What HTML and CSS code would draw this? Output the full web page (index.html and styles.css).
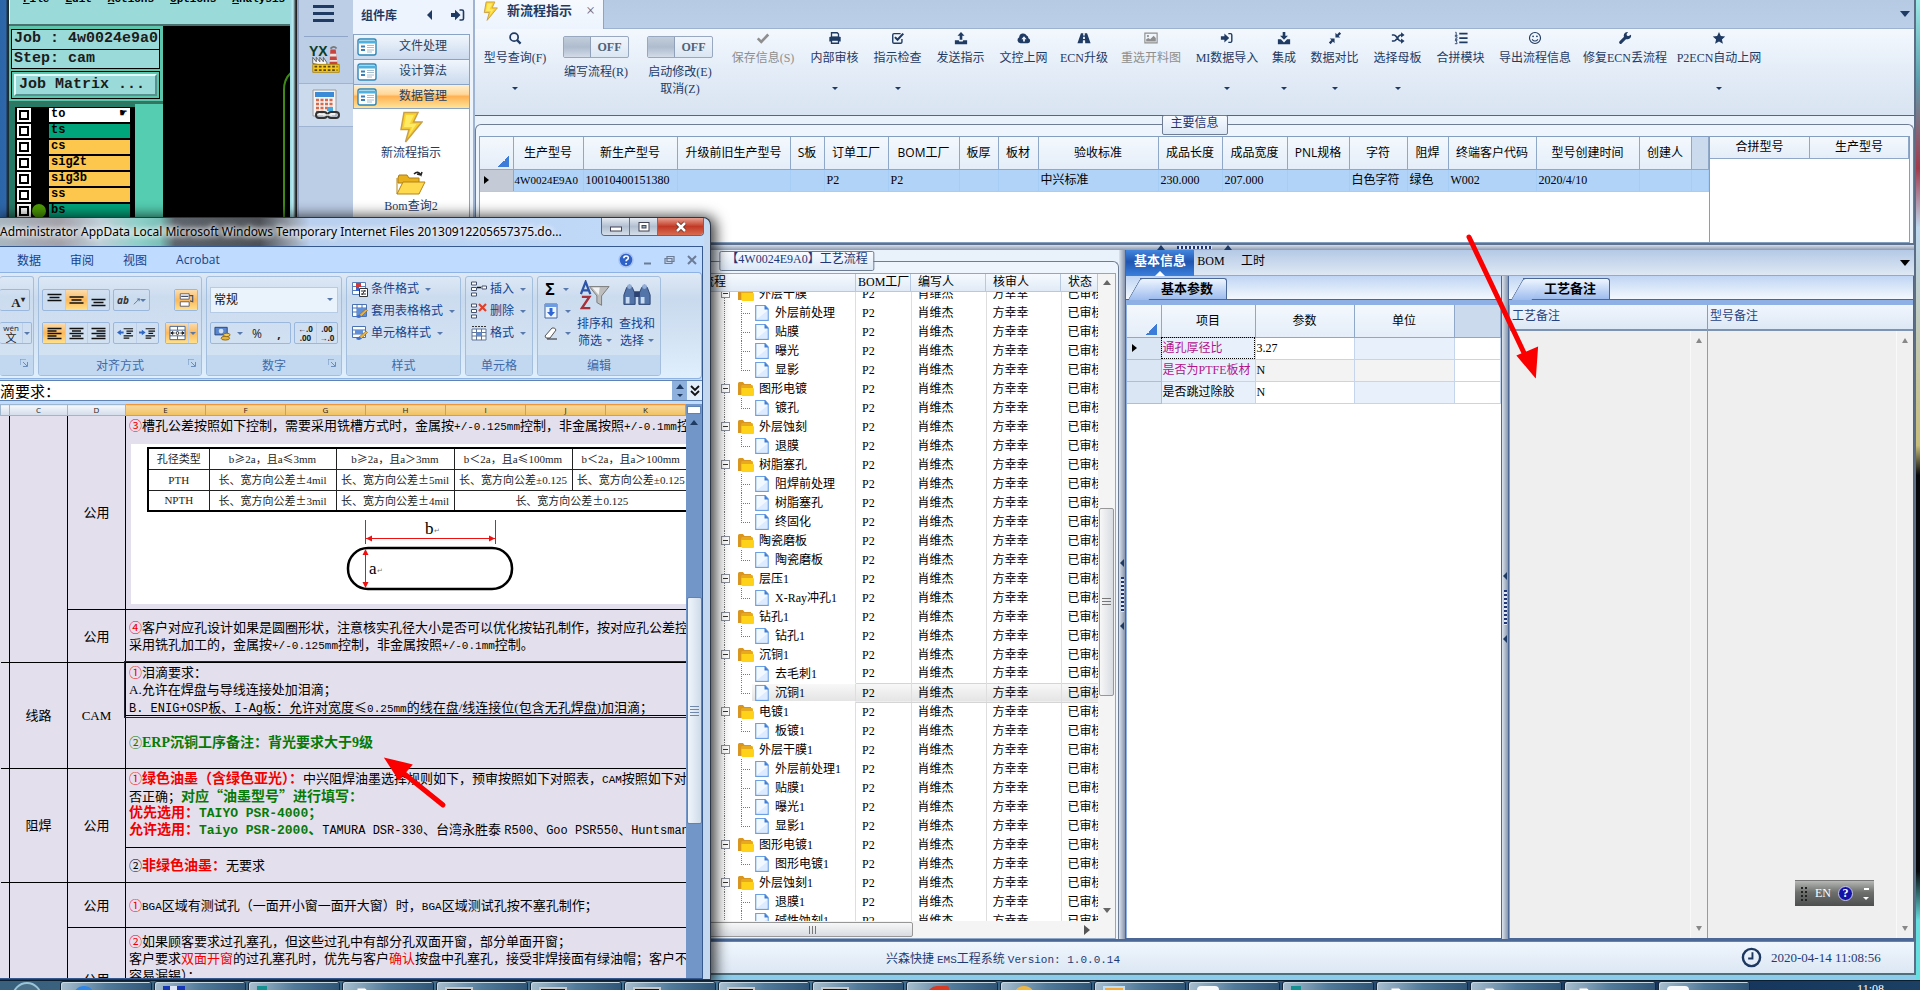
FILE: index.html
```html
<!DOCTYPE html>
<html lang="zh-CN">
<head>
<meta charset="utf-8">
<title>EMS工程系统</title>
<link rel="stylesheet" href="styles.css">
</head>
<body>
<svg class="defs" aria-hidden="true">
  <symbol id="i-search" viewBox="0 0 16 16"><circle cx="7" cy="7" r="4.6" fill="none" stroke="currentColor" stroke-width="2"/><path d="M10.4 10.4l4 4" stroke="currentColor" stroke-width="2.6"/></symbol>
  <symbol id="i-check" viewBox="0 0 16 16"><path d="M2 8.500l4 4 8-8.500" fill="none" stroke="currentColor" stroke-width="3"/></symbol>
  <symbol id="i-print" viewBox="0 0 16 16"><path d="M4 2h6.500L12 3.500V7H4z" fill="none" stroke="currentColor" stroke-width="1.500"/><path d="M1.500 7.500q0-1 1-1h11q1 0 1 1V12H1.500z" fill="currentColor"/><path d="M4 10.500h8V14H4z" fill="#eef3fb" stroke="currentColor" stroke-width="1.500"/></symbol>
  <symbol id="i-checkbox" viewBox="0 0 16 16"><path d="M12.500 9v3.500q0 1.500-1.500 1.500H3.500Q2 14 2 12.500V4.500Q2 3 3.500 3H11" fill="none" stroke="currentColor" stroke-width="1.600"/><path d="M4.500 7l3 3 6.500-7" fill="none" stroke="currentColor" stroke-width="2.400"/></symbol>
  <symbol id="i-upload" viewBox="0 0 16 16"><path d="M8 1l4 4.500H9.500V10h-3V5.500H4z" fill="currentColor"/><path d="M1 10.500h4.500L6 12h4l.5-1.500H15V15H1z" fill="currentColor"/></symbol>
  <symbol id="i-download" viewBox="0 0 16 16"><path d="M8 10L3.500 5.500h3V1h3v4.500h3z" fill="currentColor"/><path d="M1 9.500h3.500L8 13l3.500-3.500H15V15H1z" fill="currentColor"/></symbol>
  <symbol id="i-cloud" viewBox="0 0 16 16"><path d="M4 14A3.600 3.600 0 0 1 2.500 7.200 4.500 4.500 0 0 1 11 5.200a3 3 0 0 1 2 3A3 3 0 0 1 12.500 14z" fill="currentColor"/><path d="M8 6l3 3.500H9V12H7V9.500H5z" fill="#eef3fb"/></symbol>
  <symbol id="i-road" viewBox="0 0 16 16"><path d="M4.500 2.500h2.700L7 5h2l-.2-2.500h2.700L15.500 14H9.400L9.200 10.500H6.800L6.600 14H.5zM7 6.500L6.900 9h2.200L9 6.500z" fill="currentColor" fill-rule="evenodd"/></symbol>
  <symbol id="i-image" viewBox="0 0 16 16"><path d="M1 2.500h14v11H1z" fill="none" stroke="currentColor" stroke-width="1.300"/><circle cx="4.500" cy="5.800" r="1.300" fill="currentColor"/><path d="M2.500 12V9.500L5 8l2 1.500L11 5.500 13.500 8v4z" fill="currentColor"/></symbol>
  <symbol id="i-signin" viewBox="0 0 16 16"><path d="M1 6h4V2.800L10.500 8 5 13.200V10H1z" fill="currentColor"/><path d="M9.500 3H12q1.500 0 1.500 1.500v7q0 1.500-1.500 1.500H9.500" fill="none" stroke="currentColor" stroke-width="1.600"/></symbol>
  <symbol id="i-compress" viewBox="0 0 16 16"><path d="M2 8.500h5.500V14l-1.900-1.900L3 15 1 13l2.900-2.600zM14 7.500H8.500V2l1.900 1.900L13 1l2 2-2.900 2.600z" fill="currentColor"/></symbol>
  <symbol id="i-random" viewBox="0 0 16 16"><path d="M1 4.500h2.500c3 0 4.500 7 7.500 7h1.500M1 11.500h2.500c3 0 4.500-7 7.500-7h1.500" fill="none" stroke="currentColor" stroke-width="1.800"/><path d="M11.500 1.500l4 3-4 3zM11.500 8.500l4 3-4 3z" fill="currentColor"/></symbol>
  <symbol id="i-listol" viewBox="0 0 16 16"><path d="M6 3h9.500M6 8h9.500M6 13h9.500" stroke="currentColor" stroke-width="2"/><path d="M1.500 1.500h1V5M1 5h3M1 6.500h2.500v1.300L1.200 9.500H4M1 11h2.500L2.500 12.500 3.500 13.500v1H1" fill="none" stroke="currentColor"/></symbol>
  <symbol id="i-smile" viewBox="0 0 16 16"><circle cx="8" cy="8" r="6.300" fill="none" stroke="currentColor" stroke-width="1.300"/><circle cx="5.800" cy="6" r="1" fill="currentColor"/><circle cx="10.200" cy="6" r="1" fill="currentColor"/><path d="M4.600 9.500q3.400 4 6.800 0" fill="none" stroke="currentColor" stroke-width="1.200"/></symbol>
  <symbol id="i-wrench" viewBox="0 0 16 16"><path d="M9 7L3 13" stroke="currentColor" stroke-width="3.400" stroke-linecap="round"/><path d="M14.800 4.200A4.200 4.200 0 1 1 11.500 1.200L9.800 3.500l.4 2 2 .3z" fill="currentColor"/></symbol>
  <symbol id="i-star" viewBox="0 0 16 16"><path d="M8 1l2.100 4.700 5 .5-3.800 3.400 1.200 5L8 12l-4.500 2.600 1.200-5L.9 6.200l5-.5z" fill="currentColor"/></symbol>
  <symbol id="i-bolt" viewBox="0 0 24 32"><path d="M5 1.500h14L14.500 11H23L6.500 31 10 18.500H2z" fill="#fbd22c" stroke="#c9a04a" stroke-width="1.500"/><path d="M7 4h8l-4.500 9h7L10 24l3-8H5z" fill="#ffea63"/></symbol>
  <symbol id="i-form" viewBox="0 0 20 18"><rect x="1" y="1" width="18" height="16" rx="2" fill="#fff" stroke="#2d86b8" stroke-width="1.400"/><path d="M2 2.500h16v3H2z" fill="#4fb1dd"/><path d="M4 8.500h4M4 12h4" stroke="#3c7fb5" stroke-width="2"/><path d="M10 7.500h7M10 9.500h7M10 12h7M10 14h5" stroke="#a8bfd0"/></symbol>
  <symbol id="i-folder" viewBox="0 0 16 16"><path d="M0 2.500Q0 1 1.500 1H5l1.500 2H13v3H3v8H0z" fill="#d9951d"/><path d="M3 5.500Q3 4 4.500 4H14q1 0 1 1.500V14H3z" fill="#e7a91d"/><path d="M3.500 7H15q1 0 1 1v6q0 1-1 1H4.500q-1 0-1-1z" fill="#ffd21a"/></symbol>
  <symbol id="i-page" viewBox="0 0 14 17"><path d="M.7 1.500h9.500l3 3.500v11.300H.7z" fill="#f2f8ff" stroke="#6ca0e2" stroke-width="1.200"/><path d="M9.500 1l4 4.500h-4z" fill="#3c7ed8"/><path d="M2 15h10V7z" fill="#dcebff"/></symbol>
  <symbol id="i-open" viewBox="0 0 30 26"><path d="M2 8l1-3h8l2 3h10v5H2z" fill="#e8b01c" stroke="#ad7e14"/><path d="M1 24L7 12h22l-6 12z" fill="#ffd94e" stroke="#b58416"/><path d="M1 24V8" stroke="#b58416"/><path d="M18 4q4-4 7 1l1-3m-1 3l-4-1" fill="none" stroke="#222" stroke-width="1.500"/></symbol>
  <symbol id="i-factory" viewBox="0 0 34 32"><path d="M22 4h6l2 17h-9z" fill="#c8433d"/><path d="M21.700 9h7.200v3h-7.500zM21 16h8.700v2h-9z" fill="#e9e1dd"/><path d="M2 20v-7l4 5v-5l4 5v-5l4 5v-5l4 6v4z" fill="#f6f6f6" stroke="#555"/><path d="M2 21h30v9H2z" fill="#f4c81d" stroke="#ab8410"/><path d="M4 23.500h26M4 27.500h26" stroke="#5d470d" stroke-width="2" stroke-dasharray="3 2"/><path d="M22 3q4-4 7 0" fill="none" stroke="#777" stroke-width="2"/></symbol>
  <symbol id="i-calc" viewBox="0 0 30 32"><path d="M2 1h23v26H2z" fill="#f3f3f3" stroke="#9b9b9b"/><path d="M4 3h19v5H4z" fill="#3b8ad8"/><path d="M5 11h17M5 15h17M5 19h17M5 23h8" stroke="#d9694a" stroke-width="2.500" stroke-dasharray="3 1.500"/><path d="M16 18h6v4h-6z" fill="#48a8e0"/><rect x="5" y="23" width="11" height="6" rx="3" fill="none" stroke="#333" stroke-width="2"/><rect x="17" y="23" width="11" height="6" rx="3" fill="none" stroke="#333" stroke-width="2"/><path d="M12 26h9" stroke="#eee" stroke-width="1.500"/></symbol>
  <symbol id="i-launch" viewBox="0 0 8 8"><path d="M0 6V0h6M7.500 3v4.500H3M3 3l4 4" fill="none" stroke="#6c8dbb"/></symbol>
  <symbol id="a-top" viewBox="0 0 16 16"><path d="M1 2.500h14M3 5.500h10M1 8.500h14" stroke="#111" stroke-width="1.400"/></symbol>
  <symbol id="a-mid" viewBox="0 0 16 16"><path d="M1 5h14M3 8h10M1 11h14" stroke="#111" stroke-width="1.400"/></symbol>
  <symbol id="a-bot" viewBox="0 0 16 16"><path d="M1 7.500h14M3 10.500h10M1 13.500h14" stroke="#111" stroke-width="1.400"/></symbol>
  <symbol id="a-left" viewBox="0 0 16 16"><path d="M1 3.500h14M1 6h9M1 8.500h14M1 11h9M1 13.500h14" stroke="#111" stroke-width="1.300"/></symbol>
  <symbol id="a-center" viewBox="0 0 16 16"><path d="M1 3.500h14M3.500 6h9M1 8.500h14M3.500 11h9M1 13.500h14" stroke="#111" stroke-width="1.300"/></symbol>
  <symbol id="a-right" viewBox="0 0 16 16"><path d="M1 3.500h14M6 6h9M1 8.500h14M6 11h9M1 13.500h14" stroke="#111" stroke-width="1.300"/></symbol>
  <symbol id="a-out" viewBox="0 0 18 16"><path d="M7 3.500h10M10 6h7M10 8.500h5M7 11h10M7 13.500h6" stroke="#111" stroke-width="1.300"/><path d="M0 7.500l4-3v2h3v2H4v2z" fill="#2f66c4"/></symbol>
  <symbol id="a-in" viewBox="0 0 18 16"><path d="M7 3.500h10M10 6h7M10 8.500h5M7 11h10M7 13.500h6" stroke="#111" stroke-width="1.300"/><path d="M7 7.500l-4-3v2H0v2h3v2z" fill="#2f66c4"/></symbol>
  <symbol id="a-orient" viewBox="0 0 18 16"><path d="M8 15L17 6M17 6l-4 .5M17 6l-.5 4" fill="none" stroke="#4a648c" stroke-width="1.300"/></symbol>
  <symbol id="a-wrap" viewBox="0 0 18 18"><path d="M2 2h10v6H2zM2 11h10v5H2z" fill="#fff" stroke="#556"/><path d="M3 5h8M12 4h4v7l-3-1" stroke="#44506c" fill="none" stroke-width="1.300"/></symbol>
  <symbol id="a-merge" viewBox="0 0 18 16"><path d="M1 1h16v14H1zM1 5h16M1 11h16M9 1v4M9 11v4" fill="#fff" stroke="#44628e"/><path d="M2 8h4M16 8h-4M2 8l2-1.500v3zM16 8l-2-1.500v3z" stroke="#222" fill="#222"/><circle cx="9" cy="8" r="1.500" fill="none" stroke="#222"/></symbol>
  <symbol id="a-cond" viewBox="0 0 16 16"><path d="M.5 1.500h13v12H.5zM.5 5.500h13M.5 9.500h13" fill="#fff" stroke="#5a7fb8"/><path d="M4 2h5v4H4z" fill="#cc3b3b"/><path d="M4 6h3v4H4z" fill="#3b63cc"/><path d="M7.500 7.500h8v8h-8z" fill="#fff" stroke="#333"/><path d="M9 10h5M9 13h5M13 9l-3 5" stroke="#333"/></symbol>
  <symbol id="a-table" viewBox="0 0 16 16"><path d="M.5 1.500h14v12H.5zM.5 5h14M.5 9h14M5 1.500v12M10 1.500v12" fill="#fff" stroke="#4a72b0"/><path d="M5 5h9v8H5z" fill="#5f8fd8"/><path d="M7 12l7-6 1.500 1.500L9 14z" fill="#e2b14a" stroke="#8a6427" stroke-width=".6"/><path d="M4 14q2-3 4-2l1.500 1.500Q8 16 4 14" fill="#3d6fd1"/></symbol>
  <symbol id="a-style" viewBox="0 0 16 16"><path d="M.5 1.500h13v11H.5zM.5 5h13M.5 9h13" fill="#fff" stroke="#4a72b0"/><path d="M3 5h8v4H3z" fill="#5f8fd8"/><path d="M7 12l7-6 1.500 1.500L9 14z" fill="#e2b14a" stroke="#8a6427" stroke-width=".6"/><path d="M4 14q2-3 4-2l1.500 1.500Q8 16 4 14" fill="#3d6fd1"/></symbol>
  <symbol id="a-ins" viewBox="0 0 16 16"><path d="M.5 1h5v3h-5zM.5 6.500h5v3h-5zM.5 12h5v3h-5zM11 5h4.500v3H11z" fill="#fff" stroke="#44506c"/><path d="M6 6.500h4" stroke="#111" stroke-width="1.500"/></symbol>
  <symbol id="a-del" viewBox="0 0 16 16"><path d="M.5 1h5v3h-5zM.5 6.500h5v3h-5zM.5 12h5v3h-5z" fill="#fff" stroke="#44506c"/><path d="M8 1l7 7M15 1L8 8" stroke="#e0412b" stroke-width="2.200"/></symbol>
  <symbol id="a-fmt" viewBox="0 0 16 16"><path d="M1 4h14v11H1zM1 7.500h14M1 11h14M5.500 4v11M10.500 4v11" fill="#fff" stroke="#5f7396"/><path d="M5.500 7.500h5V11h-5z" fill="#5f8fd8"/><path d="M1 1.500h14" stroke="#333" stroke-dasharray="2 1"/></symbol>
  <symbol id="t-sheet" viewBox="0 0 18 10"><path d="M5 10V1h8l4 4v5z" fill="#fff" stroke="#9ab"/><path d="M1 3h10v7H1z" fill="#4e9c3c"/><path d="M3 5h6v5H3z" fill="#dff3d8"/></symbol>
  <symbol id="t-cam" viewBox="0 0 28 10"><path d="M0 0h28v10H0z" fill="#c9c9c9"/><path d="M2 2h24v8H2z" fill="#0a0a84"/><path d="M18 4h2v2M22 4h2v2" stroke="#fff" fill="none"/></symbol>
</svg>

<main class="desktop">
  <section class="cam" aria-label="CAM">
    <nav class="cam-menu"><button>File</button><button>Edit</button><button>Actions</button><button>Options</button><button>Analysis</button></nav>
    <div class="cam-body">
      <div class="cam-side">
        <div class="cam-job"><p>Job : 4w0024e9a0</p><p>Step: cam</p></div>
        <div class="cam-matrix"><button>Job Matrix ...</button></div>
        <div class="cam-lower">
          <ul class="layers">
            <li class="top"><input type="checkbox" aria-label="to"><i></i><span>to</span></li>
            <li class="green"><input type="checkbox" aria-label="ts"><i></i><span>ts</span></li>
            <li><input type="checkbox" aria-label="cs"><i></i><span>cs</span></li>
            <li><input type="checkbox" aria-label="sig2t"><i></i><span>sig2t</span></li>
            <li><input type="checkbox" aria-label="sig3b"><i></i><span>sig3b</span></li>
            <li><input type="checkbox" aria-label="ss"><i></i><span>ss</span></li>
            <li class="green on"><input type="checkbox" aria-label="bs"><i></i><span>bs</span></li>
          </ul>
        </div>
      </div>
      <svg class="cam-view" viewBox="0 0 127 195" preserveAspectRatio="xMaxYMin slice"><path d="M121 195V64q0-12 8-18" fill="none" stroke="#3f8a17" stroke-width="2"/></svg>
    </div>
  </section>

  <section class="ems" aria-label="EMS工程系统">
    <aside class="rail">
      <button class="burger" aria-label="菜单"><i></i><i></i><i></i></button>
      <button class="rail-item yx" aria-label="YX"><b>YX</b><svg><use href="#i-factory"/></svg></button>
      <button class="rail-item" aria-label="计算器"><svg><use href="#i-calc"/></svg></button>
    </aside>
    <aside class="library">
      <header><h2>组件库</h2><i class="tri-left"></i><svg class="ic16"><use href="#i-signin"/></svg></header>
      <div class="lib-list">
        <button class="lib-head"><svg><use href="#i-form"/></svg><span>文件处理</span></button>
        <button class="lib-head"><svg><use href="#i-form"/></svg><span>设计算法</span></button>
        <button class="lib-head active"><svg><use href="#i-form"/></svg><span>数据管理</span></button>
        <button class="lib-item"><svg class="bolt"><use href="#i-bolt"/></svg><span>新流程指示</span></button>
        <button class="lib-item"><svg class="open"><use href="#i-open"/></svg><span>Bom查询2</span></button>
      </div>
    </aside>

    <div class="work">
      <header class="doc-tabs">
        <button class="doc-tab"><svg><use href="#i-bolt"/></svg><b>新流程指示</b><span class="x">×</span></button>
        <i class="caret big"></i>
      </header>
      <div class="toolbar">
        <button class="tool w66"><svg><use href="#i-search"/></svg><span>型号查询(F)</span><i class="caret"></i></button>
        <label class="tool switch w68"><span class="toggle"><input type="checkbox" role="switch"><b>OFF</b></span><span>编写流程(R)</span></label>
        <label class="tool switch w72"><span class="toggle"><input type="checkbox" role="switch"><b>OFF</b></span><span>启动修改(E)</span><span>取消(Z)</span></label>
        <button class="tool w66" disabled><svg><use href="#i-check"/></svg><span>保存信息(S)</span></button>
        <button class="tool w49"><svg><use href="#i-print"/></svg><span>内部审核</span><i class="caret"></i></button>
        <button class="tool w49"><svg><use href="#i-checkbox"/></svg><span>指示检查</span><i class="caret"></i></button>
        <button class="tool w49"><svg><use href="#i-upload"/></svg><span>发送指示</span></button>
        <button class="tool w49"><svg><use href="#i-cloud"/></svg><span>文控上网</span></button>
        <button class="tool w44"><svg><use href="#i-road"/></svg><span>ECN升级</span></button>
        <button class="tool w62" disabled><svg><use href="#i-image"/></svg><span>重选开料图</span></button>
        <button class="tool w62"><svg><use href="#i-signin"/></svg><span>MI数据导入</span><i class="caret"></i></button>
        <button class="tool w24"><svg><use href="#i-download"/></svg><span>集成</span><i class="caret"></i></button>
        <button class="tool w49"><svg><use href="#i-compress"/></svg><span>数据对比</span><i class="caret"></i></button>
        <button class="tool w49"><svg><use href="#i-random"/></svg><span>选择母板</span><i class="caret"></i></button>
        <button class="tool w49"><svg><use href="#i-listol"/></svg><span>合拼模块</span></button>
        <button class="tool w72"><svg><use href="#i-smile"/></svg><span>导出流程信息</span></button>
        <button class="tool w80"><svg><use href="#i-wrench"/></svg><span>修复ECN丢流程</span></button>
        <button class="tool w80"><svg><use href="#i-star"/></svg><span>P2ECN自动上网</span><i class="caret"></i></button>
      </div>

      <section class="group main-info">
        <h3 class="chip">主要信息</h3>
        <div class="main-grids">
          <div class="grid-wrap main-wrap">
          <table class="grid">
            <colgroup><col class="c33"><col class="c70"><col class="c94"><col class="c113"><col class="c34"><col class="c64"><col class="c71"><col class="c39"><col class="c40"><col class="c120"><col class="c64"><col class="c65"><col class="c62"><col class="c58"><col class="c41"><col class="c88"><col class="c103"><col class="c52"><col></colgroup>
            <thead><tr><th class="corner"></th><th>生产型号</th><th>新生产型号</th><th>升级前旧生产型号</th><th>S板</th><th>订单工厂</th><th>BOM工厂</th><th>板厚</th><th>板材</th><th>验收标准</th><th>成品长度</th><th>成品宽度</th><th>PNL规格</th><th>字符</th><th>阻焊</th><th>终端客户代码</th><th>型号创建时间</th><th>创建人</th><th class="filler"></th></tr></thead>
            <tbody><tr><td class="mark"><i></i></td><td class="tight">4W0024E9A0</td><td>10010400151380</td><td></td><td></td><td>P2</td><td>P2</td><td></td><td></td><td>中兴标准</td><td>230.000</td><td>207.000</td><td></td><td>白色字符</td><td>绿色</td><td>W002</td><td>2020/4/10</td><td></td><td></td></tr></tbody>
          </table>
          </div>
          <div class="grid-wrap side-wrap">
            <table class="grid short"><thead><tr><th>合拼型号</th><th>生产型号</th></tr></thead></table>
          </div>
        </div>
      </section>

      <div class="hsplit"><i class="tri-up"></i><i class="dots"></i><i class="tri-up"></i></div>

      <div class="lower">
        <section class="group process">
          <h3 class="chip">【4W0024E9A0】工艺流程</h3>
          <div class="proc-box">
            <div class="proc-view">
              <div class="proc-head"><span>流程</span><span>BOM工厂</span><span>编写人</span><span>核审人</span><span>状态</span></div>
              <div class="proc-scroll">
              <table class="tree">
                <tbody>
                <tr class="f"><td><i></i><svg><use href="#i-folder"/></svg>外层干膜</td><td>P2</td><td>肖维杰</td><td>方幸幸</td><td>已审核</td></tr>
                <tr><td><i></i><svg><use href="#i-page"/></svg>外层前处理</td><td>P2</td><td>肖维杰</td><td>方幸幸</td><td>已审核</td></tr>
                <tr><td><i></i><svg><use href="#i-page"/></svg>贴膜</td><td>P2</td><td>肖维杰</td><td>方幸幸</td><td>已审核</td></tr>
                <tr><td><i></i><svg><use href="#i-page"/></svg>曝光</td><td>P2</td><td>肖维杰</td><td>方幸幸</td><td>已审核</td></tr>
                <tr class="l"><td><i></i><svg><use href="#i-page"/></svg>显影</td><td>P2</td><td>肖维杰</td><td>方幸幸</td><td>已审核</td></tr>
                <tr class="f"><td><i></i><svg><use href="#i-folder"/></svg>图形电镀</td><td>P2</td><td>肖维杰</td><td>方幸幸</td><td>已审核</td></tr>
                <tr class="l"><td><i></i><svg><use href="#i-page"/></svg>镀孔</td><td>P2</td><td>肖维杰</td><td>方幸幸</td><td>已审核</td></tr>
                <tr class="f"><td><i></i><svg><use href="#i-folder"/></svg>外层蚀刻</td><td>P2</td><td>肖维杰</td><td>方幸幸</td><td>已审核</td></tr>
                <tr class="l"><td><i></i><svg><use href="#i-page"/></svg>退膜</td><td>P2</td><td>肖维杰</td><td>方幸幸</td><td>已审核</td></tr>
                <tr class="f"><td><i></i><svg><use href="#i-folder"/></svg>树脂塞孔</td><td>P2</td><td>肖维杰</td><td>方幸幸</td><td>已审核</td></tr>
                <tr><td><i></i><svg><use href="#i-page"/></svg>阻焊前处理</td><td>P2</td><td>肖维杰</td><td>方幸幸</td><td>已审核</td></tr>
                <tr><td><i></i><svg><use href="#i-page"/></svg>树脂塞孔</td><td>P2</td><td>肖维杰</td><td>方幸幸</td><td>已审核</td></tr>
                <tr class="l"><td><i></i><svg><use href="#i-page"/></svg>终固化</td><td>P2</td><td>肖维杰</td><td>方幸幸</td><td>已审核</td></tr>
                <tr class="f"><td><i></i><svg><use href="#i-folder"/></svg>陶瓷磨板</td><td>P2</td><td>肖维杰</td><td>方幸幸</td><td>已审核</td></tr>
                <tr class="l"><td><i></i><svg><use href="#i-page"/></svg>陶瓷磨板</td><td>P2</td><td>肖维杰</td><td>方幸幸</td><td>已审核</td></tr>
                <tr class="f"><td><i></i><svg><use href="#i-folder"/></svg>层压1</td><td>P2</td><td>肖维杰</td><td>方幸幸</td><td>已审核</td></tr>
                <tr class="l"><td><i></i><svg><use href="#i-page"/></svg>X-Ray冲孔1</td><td>P2</td><td>肖维杰</td><td>方幸幸</td><td>已审核</td></tr>
                <tr class="f"><td><i></i><svg><use href="#i-folder"/></svg>钻孔1</td><td>P2</td><td>肖维杰</td><td>方幸幸</td><td>已审核</td></tr>
                <tr class="l"><td><i></i><svg><use href="#i-page"/></svg>钻孔1</td><td>P2</td><td>肖维杰</td><td>方幸幸</td><td>已审核</td></tr>
                <tr class="f"><td><i></i><svg><use href="#i-folder"/></svg>沉铜1</td><td>P2</td><td>肖维杰</td><td>方幸幸</td><td>已审核</td></tr>
                <tr><td><i></i><svg><use href="#i-page"/></svg>去毛刺1</td><td>P2</td><td>肖维杰</td><td>方幸幸</td><td>已审核</td></tr>
                <tr class="l sel"><td><i></i><svg><use href="#i-page"/></svg>沉铜1</td><td>P2</td><td>肖维杰</td><td>方幸幸</td><td>已审核</td></tr>
                <tr class="f"><td><i></i><svg><use href="#i-folder"/></svg>电镀1</td><td>P2</td><td>肖维杰</td><td>方幸幸</td><td>已审核</td></tr>
                <tr class="l"><td><i></i><svg><use href="#i-page"/></svg>板镀1</td><td>P2</td><td>肖维杰</td><td>方幸幸</td><td>已审核</td></tr>
                <tr class="f"><td><i></i><svg><use href="#i-folder"/></svg>外层干膜1</td><td>P2</td><td>肖维杰</td><td>方幸幸</td><td>已审核</td></tr>
                <tr><td><i></i><svg><use href="#i-page"/></svg>外层前处理1</td><td>P2</td><td>肖维杰</td><td>方幸幸</td><td>已审核</td></tr>
                <tr><td><i></i><svg><use href="#i-page"/></svg>贴膜1</td><td>P2</td><td>肖维杰</td><td>方幸幸</td><td>已审核</td></tr>
                <tr><td><i></i><svg><use href="#i-page"/></svg>曝光1</td><td>P2</td><td>肖维杰</td><td>方幸幸</td><td>已审核</td></tr>
                <tr class="l"><td><i></i><svg><use href="#i-page"/></svg>显影1</td><td>P2</td><td>肖维杰</td><td>方幸幸</td><td>已审核</td></tr>
                <tr class="f"><td><i></i><svg><use href="#i-folder"/></svg>图形电镀1</td><td>P2</td><td>肖维杰</td><td>方幸幸</td><td>已审核</td></tr>
                <tr class="l"><td><i></i><svg><use href="#i-page"/></svg>图形电镀1</td><td>P2</td><td>肖维杰</td><td>方幸幸</td><td>已审核</td></tr>
                <tr class="f"><td><i></i><svg><use href="#i-folder"/></svg>外层蚀刻1</td><td>P2</td><td>肖维杰</td><td>方幸幸</td><td>已审核</td></tr>
                <tr><td><i></i><svg><use href="#i-page"/></svg>退膜1</td><td>P2</td><td>肖维杰</td><td>方幸幸</td><td>已审核</td></tr>
                <tr><td><i></i><svg><use href="#i-page"/></svg>碱性蚀刻1</td><td>P2</td><td>肖维杰</td><td>方幸幸</td><td>已审核</td></tr>
                </tbody>
              </table>
              </div>
              <div class="vbar"><i class="tri-up grey"></i><span class="thumb"></span><i class="caret grey"></i></div>
            </div>
            <div class="hbar"><span class="thumb"></span><i class="tri-right"></i></div>
          </div>
        </section>

        <div class="vsplit"><i class="tri-left"></i><i class="dots"></i><i class="tri-left"></i></div>

        <section class="detail">
          <nav class="dtabs"><button class="on">基本信息</button><button>BOM</button><button>工时</button><i class="caret big"></i></nav>
          <div class="panes">
            <div class="pane params">
              <div class="ptab-row"><button class="ptab">基本参数</button></div>
              <div class="pane-body">
                <table class="grid props">
                  <colgroup><col class="c34"><col class="c94"><col class="c99"><col class="c100"><col></colgroup>
                  <thead><tr><th class="corner"></th><th>项目</th><th>参数</th><th>单位</th><th class="filler"></th></tr></thead>
                  <tbody>
                    <tr><td class="mark"><i></i></td><td class="pink focus">通孔厚径比</td><td>3.27</td><td></td><td></td></tr>
                    <tr class="alt"><td class="mark"></td><td class="pink">是否为PTFE板材</td><td>N</td><td></td><td></td></tr>
                    <tr><td class="mark"></td><td>是否跳过除胶</td><td>N</td><td></td><td></td></tr>
                  </tbody>
                </table>
              </div>
            </div>
            <div class="vsplit"><i class="tri-left"></i><i class="dots"></i><i class="tri-left"></i></div>
            <div class="pane notes">
              <div class="ptab-row"><button class="ptab">工艺备注</button></div>
              <div class="pane-body note-cols">
                <div class="note"><label for="n1">工艺备注</label><div class="note-area"><textarea id="n1"></textarea><div class="note-bar"><i class="tri-up grey"></i><i class="caret grey"></i></div></div></div>
                <div class="note"><label for="n2">型号备注</label><div class="note-area"><textarea id="n2"></textarea><div class="note-bar"><i class="tri-up grey"></i><i class="caret grey"></i></div></div></div>
              </div>
            </div>
          </div>
        </section>
      </div>
    </div>
    <footer class="status"><span class="ver">兴森快捷 <span class="mono">EMS</span>工程系统 <span class="mono">Version: 1.0.0.14</span></span>
      <svg class="clock" viewBox="0 0 22 22"><circle cx="11" cy="11" r="9" fill="none" stroke="#1c3760" stroke-width="2.500"/><path d="M12 5.500V12H7.500" fill="none" stroke="#1c3760" stroke-width="2"/></svg>
      <time>2020-04-14 11:08:56</time></footer>
  </section>

  <section class="excel" aria-label="Excel">
    <header class="title"><h1>Administrator AppData Local Microsoft Windows Temporary Internet Files 20130912205657375.do...</h1>
      <div class="winbtns">
        <button aria-label="最小化"><svg viewBox="0 0 14 12"><rect x="1.500" y="6" width="11" height="4" fill="#fff" stroke="#445"/></svg></button><button aria-label="最大化"><svg viewBox="0 0 14 12"><rect x="2" y="1.500" width="10" height="8.500" fill="#fff" stroke="#445"/><rect x="5" y="4.500" width="4" height="2.500" fill="#9ab" stroke="#445"/></svg></button><button class="close" aria-label="关闭"><svg viewBox="0 0 14 12"><path d="M3 2l8 8M11 2l-8 8" stroke="#5d2a24" stroke-width="4"/><path d="M3 2l8 8M11 2l-8 8" stroke="#fff" stroke-width="2.500"/></svg></button>
      </div>
    </header>
    <div class="xl-body">
      <nav class="xl-tabs"><button>数据</button><button>审阅</button><button>视图</button><button>Acrobat</button>
        <svg class="xl-ctl" viewBox="0 0 84 16"><circle cx="8" cy="8" r="7" fill="#2f62c9" stroke="#a9c2ee" stroke-width="1.500"/><path d="M5.800 6.300q0-2.300 2.300-2.300t2.200 2q0 1.200-1.200 1.700-1 .4-1 1.500M8.100 11v1.600" fill="none" stroke="#fff" stroke-width="1.600"/><path d="M26 11.500h7" stroke="#6c7c96" stroke-width="2"/><path d="M49 4.500h7v5h-7zM47 6.500h7v5h-7z" fill="#c5d6ee" stroke="#6c7c96" stroke-width="1.200"/><path d="M70 4l8 8M78 4l-8 8" stroke="#6c7c96" stroke-width="2"/></svg>
      </nav>
      <div class="ribbon">
        <div class="rg g-font"><div class="rg-in"><div class="rrow"><span class="bs"><button class="serif big-a">A<sup>▾</sup></button></span></div><div class="rrow"><span class="bs"><button class="wen"><small>wén</small>文</button><button class="dd"><i class="caret"></i></button></span></div></div><footer><svg><use href="#i-launch"/></svg></footer></div>
        <div class="rg g-align"><div class="rg-in">
          <div class="rrow"><span class="bs"><button><svg><use href="#a-top"/></svg></button><button class="hot"><svg><use href="#a-mid"/></svg></button><button><svg><use href="#a-bot"/></svg></button></span><span class="bs"><button class="orient"><i>ab</i><svg><use href="#a-orient"/></svg><i class="caret"></i></button></span><span class="bs push"><button class="hot"><svg><use href="#a-wrap"/></svg></button></span></div>
          <div class="rrow"><span class="bs"><button class="hot"><svg><use href="#a-left"/></svg></button><button><svg><use href="#a-center"/></svg></button><button><svg><use href="#a-right"/></svg></button></span><span class="bs"><button><svg><use href="#a-out"/></svg></button><button><svg><use href="#a-in"/></svg></button></span><span class="bs push"><button class="hot"><svg><use href="#a-merge"/></svg></button><button class="hot dd"><i class="caret"></i></button></span></div>
        </div><footer>对齐方式<svg><use href="#i-launch"/></svg></footer></div>
        <div class="rg g-num"><div class="rg-in">
          <div class="rrow pick"><select aria-label="数字格式"><option>常规</option></select><i class="caret"></i></div>
          <div class="rrow"><span class="bs grow"><button><svg viewBox="0 0 18 16"><path d="M1 2h13v8H1z" fill="#5a86cf" stroke="#27477f"/><circle cx="7.500" cy="6" r="2.500" fill="#cfe0f8"/><ellipse cx="12" cy="13.500" rx="4.500" ry="2" fill="#e7b53a" stroke="#8e6717"/><ellipse cx="13.500" cy="10" rx="3.500" ry="1.800" fill="#f3cb58" stroke="#8e6717"/></svg></button><button class="dd"><i class="caret"></i></button><button>%</button><button><b>,</b></button></span><span class="bs"><button class="dec">←.0<br>.00</button><button class="dec">.00<br>→.0</button></span></div>
        </div><footer>数字<svg><use href="#i-launch"/></svg></footer></div>
        <div class="rg g-style"><div class="rg-list"><button><svg><use href="#a-cond"/></svg>条件格式<i class="caret"></i></button><button><svg><use href="#a-table"/></svg>套用表格格式<i class="caret"></i></button><button><svg><use href="#a-style"/></svg>单元格样式<i class="caret"></i></button></div><footer>样式</footer></div>
        <div class="rg g-cell"><div class="rg-list"><button><svg><use href="#a-ins"/></svg>插入<i class="caret"></i></button><button><svg><use href="#a-del"/></svg>删除<i class="caret"></i></button><button><svg><use href="#a-fmt"/></svg>格式<i class="caret"></i></button></div><footer>单元格</footer></div>
        <div class="rg g-edit"><div class="rg-edit">
          <div class="rg-list"><button><b class="sigma">Σ</b><i class="caret"></i></button><button><svg viewBox="0 0 14 16"><path d="M1 1h12v14H1z" fill="#eef5ff" stroke="#41659f"/><path d="M1 1h12v3H1z" fill="#6f9be0"/><path d="M5.500 5h3v4H11l-4 4.500L3 9h2.500z" fill="#2f66d4"/></svg><i class="caret"></i></button><button><svg viewBox="0 0 16 16"><path d="M2 11l7-8q3-1 4 2l-6 8H3z" fill="#fff" stroke="#555"/><path d="M4 14h10" stroke="#222"/></svg><i class="caret"></i></button></div>
          <button class="bigbtn"><svg viewBox="0 0 32 32"><path d="M1 15L6 2l5 13M3 11h6" fill="none" stroke="#2c55a8" stroke-width="2.400"/><path d="M2 18h8L2 30h9" fill="none" stroke="#a8323c" stroke-width="2.600"/><path d="M10 7h21l-8 10v10l-5-3v-7z" fill="#bdbdbd" stroke="#777"/><path d="M13 8h8l-1 8z" fill="#f2f2f2"/></svg><span>排序和<br>筛选<i class="caret"></i></span></button>
          <button class="bigbtn"><svg viewBox="0 0 32 32"><path d="M5 8q3-5 6 0l3 7v11H2V16zM21 8q3-5 6 0l3 8v10H18V15z" fill="#5274a8" stroke="#2d4472"/><path d="M13 12h6v6h-6z" fill="#2d4472"/><path d="M4 18h4v7H4zM20 18h4v7h-4z" fill="#c9daf3"/><circle cx="8" cy="7" r="2.500" fill="#93aed6"/><circle cx="24" cy="7" r="2.500" fill="#93aed6"/></svg><span>查找和<br>选择<i class="caret"></i></span></button>
        </div><footer>编辑</footer></div>
      </div>
      <div class="formula"><input type="text" aria-label="编辑栏" value="滴要求："><span class="spin"><i class="tri-up"></i><i class="caret"></i></span><button aria-label="展开"><svg viewBox="0 0 10 12"><path d="M1 1l4 4 4-4M1 6l4 4 4-4" fill="none" stroke="#111" stroke-width="1.800"/></svg></button></div>
      <div class="sheet-row">
        <div class="sheet">
          <table class="cells">
            <colgroup><col class="c9"><col class="c58"><col class="c58"><col class="c80"><col class="c80"><col class="c80"><col class="c80"><col class="c80"><col class="c80"><col class="c80"><col></colgroup>
            <thead><tr><th></th><th>C</th><th>D</th><th class="s">E</th><th class="s">F</th><th class="s">G</th><th class="s">H</th><th class="s">I</th><th class="s">J</th><th class="s">K</th><th class="s"></th></tr></thead>
            <tbody>
              <tr class="h194"><td rowspan="2"></td><td rowspan="2"></td><td class="mid">公用</td><td colspan="8" class="txt topcell"><p><em>③</em>槽孔公差按照如下控制，需要采用铣槽方式时，金属按<span class="mono">+/-0.125mm</span>控制，非金属按照<span class="mono">+/-0.1mm</span>控制</p>
                <div class="pic">
                  <table class="tol">
                    <colgroup><col class="c61"><col class="c127"><col class="c118"><col class="c118"><col class="c118"></colgroup>
                    <tr><td>孔径类型</td><td>b<span class="cjk">≥</span>2a，且a<span class="cjk">≤</span>3mm</td><td>b<span class="cjk">≥</span>2a，且a＞3mm</td><td>b＜2a，且a<span class="cjk">≤</span>100mm</td><td>b＜2a，且a＞100mm</td></tr>
                    <tr><td>PTH</td><td>长、宽方向公差<span class="cjk">±</span>4mil</td><td>长、宽方向公差<span class="cjk">±</span>5mil</td><td>长、宽方向公差±0.125</td><td>长、宽方向公差±0.125</td></tr>
                    <tr><td>NPTH</td><td>长、宽方向公差<span class="cjk">±</span>3mil</td><td>长、宽方向公差<span class="cjk">±</span>4mil</td><td colspan="2">长、宽方向公差<span class="cjk">±</span>0.125</td></tr>
                  </table>
                  <svg class="slot" width="180" height="76" viewBox="340 518 180 76"><rect x="348" y="549" width="164" height="41" rx="20" fill="none" stroke="#000" stroke-width="2.500"/><g stroke="#e11" fill="#e11"><path d="M365.500 521v24M495.500 521v24M366 539.500h129M365.500 551v37" fill="none"/><path stroke="none" d="M366 539.500l6-3v6zM495 539.500l-6-3v6zM365.500 550l-3 6h6zM365.500 589l-3-6h6z"/></g><text x="425" y="535" font-size="17">b</text><text x="369" y="575" font-size="17">a</text><text x="434" y="534" font-size="7" fill="#777">↵</text><text x="377" y="574" font-size="7" fill="#777">↵</text></svg>
                </div></td></tr>
              <tr class="h53"><td class="mid">公用</td><td colspan="8" class="txt"><p><em>④</em>客户对应孔设计如果是圆圈形状，注意核实孔径大小是否可以优化按钻孔制作，按对应孔公差控制</p><p>采用铣孔加工的，金属按<span class="mono">+/-0.125mm</span>控制，非金属按照<span class="mono">+/-0.1mm</span>控制。</p></td></tr>
              <tr class="h53"><td rowspan="2"></td><td rowspan="2" class="mid">线路</td><td rowspan="2" class="mid">CAM</td><td colspan="8" class="txt picked"><p><em>①</em>泪滴要求：</p><p>A.允许在焊盘与导线连接处加泪滴；</p><p><span class="mono m12">B. ENIG+OSP</span>板、<span class="mono m12">I-Ag</span>板：允许对宽度<span class="cjk">≤</span><span class="mono">0.25mm</span>的线在盘/线连接位(包含无孔焊盘)加泪滴；</p></td></tr>
              <tr class="h53"><td colspan="8" class="txt"><p class="go">②<b>ERP沉铜工序备注：背光要求大于9级</b></p></td></tr>
              <tr class="h79"><td rowspan="2"></td><td rowspan="2" class="mid">阻焊</td><td rowspan="2" class="mid">公用</td><td colspan="8" class="txt topcell"><p><em>①<b>绿色油墨（含绿色亚光）：</b></em>中兴阻焊油墨选择规则如下，预审按照如下对照表，<span class="mono">CAM</span>按照如下对照</p><p>否正确；<b class="go">对应<span class="cjk">“</span>油墨型号<span class="cjk">”</span>进行填写：</b></p><p><em><b>优先选用：</b></em><b class="go"><span class="mono">TAIYO PSR-4000</span>；</b></p><p><em><b>允许选用：</b></em><b class="go"><span class="mono">Taiyo PSR-2000</span>、</b><span class="mono m12">TAMURA DSR-330</span>、台湾永胜泰 <span class="mono m12">R500</span>、<span class="mono m12">Goo PSR550</span>、<span class="mono m12">Huntsman</span></p></td></tr>
              <tr class="h35"><td colspan="8" class="txt"><p>②<em><b>非绿色油墨：</b></em>无要求</p></td></tr>
              <tr class="h45"><td rowspan="2"></td><td rowspan="2"></td><td class="mid">公用</td><td colspan="8" class="txt"><p><em>①</em><span class="mono">BGA</span>区域有测试孔（一面开小窗一面开大窗）时，<span class="mono">BGA</span>区域测试孔按不塞孔制作；</p></td></tr>
              <tr class="h104"><td class="mid">公用</td><td colspan="8" class="txt lastcell"><p><em>②</em>如果顾客要求过孔塞孔，但这些过孔中有部分孔双面开窗，部分单面开窗；</p><p>客户要求<em>双面开窗</em>的过孔塞孔时，优先与客户<em>确认</em>按盘中孔塞孔，接受非焊接面有绿油帽；客户不接</p><p>容易漏锡）；</p></td></tr>
            </tbody>
          </table>
        </div>
        <div class="xl-bar"><span class="split"></span><i class="tri-up"></i><span class="thumb"></span></div>
      </div>
    </div>
  </section>

  <div class="ime"><i class="grip"></i><span>EN</span><button aria-label="帮助">?</button><span class="ime-ctl"><i></i><i class="caret"></i></span></div>

  <svg class="marks" aria-hidden="true"><g stroke="#fb0000" fill="#fb0000" stroke-linecap="round"><path d="M1469 237l56 118" stroke-width="5"/><path d="M1535 376l-17-20 19-8z" stroke-width="2"/><path d="M443 805l-41-33" stroke-width="5"/><path d="M386 759l13 20 12-14z" stroke-width="2"/></g></svg>

  <nav class="taskbar">
    <i class="orb"></i>
    <button aria-label="浏览器"><i class="ball"></i></button><button aria-label="保存"><i class="disk"></i></button><button aria-label="应用"><i class="teal"></i></button><button aria-label="表格"><svg><use href="#t-sheet"/></svg></button><button aria-label="CAM 1"><svg class="wide"><use href="#t-cam"/></svg></button><button aria-label="CAM 2"><svg class="wide"><use href="#t-cam"/></svg></button><button aria-label="CAM 3"><svg class="wide"><use href="#t-cam"/></svg></button><button aria-label="CAM 4"><svg class="wide"><use href="#t-cam"/></svg></button><button aria-label="CAM 5"><svg class="wide"><use href="#t-cam"/></svg></button><button aria-label="红"><i class="red"></i></button><button aria-label="花"><i class="ball gold"></i></button><button aria-label="图"><i class="pict"></i></button><button aria-label="文档"><i class="doc"></i></button><button aria-label="终端"><i class="teal"></i></button><button aria-label="表 1"><svg><use href="#t-sheet"/></svg></button><button aria-label="表 2"><svg><use href="#t-sheet"/></svg></button><button aria-label="表 3"><svg><use href="#t-sheet"/></svg></button><button aria-label="文 1"><i class="doc"></i></button>
    <time>11:08</time>
  </nav>
</main>
</body>
</html>
```

FILE: styles.css
```css
* { box-sizing: border-box; }
body { margin: 0; }
body, button, input, select, textarea, h1, h2, h3, p, ul { font-family: "Liberation Serif", "Noto Sans CJK SC", sans-serif; font-size: 12px; }
h1, h2, h3, p, ul { margin: 0; padding: 0; font-weight: 400; }
button { border: 0; background: none; padding: 0; margin: 0; color: inherit; display: block; }
svg { display: block; flex: none; }
.defs { display: none; }
.mono { font-family: "Liberation Mono", monospace; font-size: 11px; }
.m12 { font-size: 12px; }
.cjk { font-family: "Noto Sans CJK SC", sans-serif; }
.desktop { position: relative; height: 100vh; overflow: hidden; background: linear-gradient(#9be9e6 0, #5d9fae 8%, #a33a4c 17%, #bcd7ef 23%, #c9bd7a 45%, #05070a 48%, #05070a 88%, #66dfe0 93%); color: #000; }

/* small arrows */
.caret, .tri-up, .tri-left, .tri-right { display: block; flex: none; width: 0; height: 0; border: 3px solid transparent; color: #1f3a63; }
.caret { border-top-color: currentColor; border-bottom: 0; }
.caret.big { border-width: 6px 5px 0; }
.tri-up { border-bottom-color: currentColor; border-top: 0; border-width: 0 4px 5px; }
.tri-left { border-width: 4px 4px 4px 0; border-right-color: currentColor; }
.tri-right { border-width: 5px 0 5px 6px; border-left-color: #555; }
.grey { color: #666; border-left-width: 4px; border-right-width: 4px; }
.caret.grey { border-top-width: 5px; }

/* CAM window */
.cam { position: absolute; left: 0; top: 0; width: 297px; height: 240px; padding: 0 7px 0 9px; background: linear-gradient(90deg, #2b66a8 0, #2f67ab 6px, #234 7px, #182b2d 9px, #111 288px, #96d8e0 290px, #bdeaf2 293px, #222 296px); display: flex; flex-direction: column; }
.cam-menu { height: 26px; flex: none; background: #9adbd9; border-bottom: 2px solid #47706e; display: flex; gap: 16px; padding: 0 14px; overflow: hidden; align-items: flex-start; box-shadow: inset 1px 0 #e8ffff; }
.cam-menu button { font: bold 11px/12px "Liberation Mono", monospace; margin-top: -7px; }
.cam-menu button::first-letter { text-decoration: underline; }
.cam-body { flex: 1; display: flex; background: #000; min-height: 0; }
.cam-side { width: 154px; flex: none; background: #5cc5ab; display: flex; flex-direction: column; padding-top: 3px; }
.cam-job, .cam-matrix { margin: 0 3px 2px 2px; border: 1px solid #000; background: #9adbd9; }
.cam-job p { font: 15px/18px "Liberation Mono", monospace; font-weight: 700; padding-left: 2px; height: 19px; white-space: nowrap; color: #1c1c1c; }
.cam-job p + p { border-top: 1px solid #000; }
.cam-matrix { height: 28px; padding: 2px; background: #5cc5ab; }
.cam-matrix button { width: 100%; height: 22px; text-align: left; padding-left: 3px; background: #9adbd9; font: bold 15px/18px "Liberation Mono", monospace; border: 2px solid; border-color: #dffaf8 #56918f #56918f #dffaf8; color: #1c1c1c; }
.cam-lower { flex: 1; background: #54cdb0; border-top: 3px solid #34755f; }
.layers { list-style: none; width: 126px; background: #000; border: 6px solid #277a66; border-right: 0; border-top-width: 3px; padding: 0 5px 0 2px; height: 100%; }
.layers li { display: flex; align-items: center; height: 16px; gap: 1px; }
.layers input { appearance: none; margin: 0; width: 14px; height: 14px; background: #fff; border: 2px solid #fff; outline: 2px solid #000; outline-offset: -4px; }
.layers li i { width: 14px; height: 14px; border-radius: 7px; }
.layers .on i { background: #4d9c05; }
.layers span { flex: 1; margin-left: 2px; height: 14px; background: #fdc64c; font: bold 12px/13px "Liberation Mono", monospace; padding-left: 2px; }
.layers .green span { background: #00a57c; }
.layers .top span { background: #fff; }
.layers .top span::after { content: "☛"; float: right; padding-right: 3px; }
.cam-view { flex: 1; height: 195px; min-width: 0; }

/* EMS window */
.ems { position: absolute; left: 297px; right: 4px; top: 0; bottom: 15px; display: grid; grid-template-columns: 54px 120px minmax(0, 1fr); grid-template-rows: minmax(0, 1fr) 32px; background: #e9f1fb; border-right: 2px solid #5b6e86; border-bottom: 2px solid #4e6f7c; box-shadow: 0 5px 0 #8ccbe9; border-left: 2px solid #8fa3c4; }
.rail { background: #bccde6; display: flex; flex-direction: column; }
.burger { display: flex; flex-direction: column; gap: 4px; height: 37px; margin: 0 5px; padding: 5px 9px; border-bottom: 1px solid #8fa6c8; }
.burger i { height: 3px; width: 21px; background: #1f3a63; }
.rail-item { height: 43px; display: flex; justify-content: center; align-items: center; background: #ccdaee; border-bottom: 1px solid #9fb3d2; }
.rail-item svg { width: 30px; height: 32px; }
.rail-item.yx { height: 47px; background: #bccde6; position: relative; }
.yx b { position: absolute; left: 10px; top: 6px; font: bold 14px/16px "Liberation Sans", sans-serif; color: #0c3c26; }
.library { display: flex; flex-direction: column; border-right: 3px solid #eef4fc; background: #fff; min-width: 0; }
.library header { height: 34px; flex: none; display: flex; align-items: center; padding: 0 4px 4px 8px; background: #edf4fd; color: #1f3a63; }
.library h2 { font-weight: 700; flex: 1; color: #1f3a63; }
.library header .tri-left { margin-right: 18px; border-width: 5px 5px 5px 0; }
.ic16 { width: 16px; height: 16px; }
.lib-list { flex: 1; border-right: 1px solid #8aa4c6; }
.lib-head { width: 100%; height: 25px; display: flex; align-items: center; border: 1px solid #8aa4c6; border-width: 1px 0 0 1px; background: linear-gradient(#f1f6fd, #cbdaee); color: #27415f; padding-left: 3px; }
.lib-head svg { width: 20px; height: 18px; }
.lib-head span { flex: 1; text-align: center; line-height: 16px; padding-bottom: 2px; }
.lib-head.active { background: linear-gradient(#fff0cf 0, #ffd79a 40%, #ffb254 50%, #ffe49b 100%); border-bottom-width: 1px; }
.lib-item { width: 100%; color: #1f3a63; display: flex; flex-direction: column; align-items: center; gap: 1px; padding-top: 2px; line-height: 18px; margin-bottom: 6px; }
.lib-item .bolt { width: 24px; height: 32px; }
.lib-item .open { width: 30px; height: 26px; }

.work { display: flex; flex-direction: column; min-width: 0; min-height: 0; border-left: 2px solid #9db4d3; }
.doc-tabs { height: 29px; flex: none; background: linear-gradient(#b6cae4, #bccfe8); border-bottom: 1px solid #9db1d0; display: flex; align-items: center; justify-content: space-between; padding-right: 4px; }
.doc-tab { height: 29px; display: flex; align-items: center; gap: 9px; width: 129px; padding: 0 8px; background: linear-gradient(#f6faff, #edf4fd); border-right: 1px solid #8ca4c8; color: #1f3a63; line-height: 18px; padding-bottom: 6px; }
.doc-tab svg { width: 15px; height: 24px; }
.doc-tab b { font-size: 13px; }
.doc-tab .x { margin-left: auto; font-size: 16px; color: #667; }
.toolbar { height: 87px; flex: none; display: flex; gap: 14px; padding: 1px 8px 0 7px; background: linear-gradient(#f3f8fe 0, #e3ecf7 50%, #d9e4f2 100%); border-bottom: 1px solid #56667f; }
.tool { display: flex; flex-direction: column; align-items: center; flex: none; color: #1f3a63; white-space: nowrap; height: 80px; line-height: 18px; }
.tool svg { width: 14px; height: 14px; margin: 1px 0 4px; }
.tool > span { display: block; }
.tool .caret { margin-top: 20px; }
.tool:disabled { color: #8e8e8e; }
.switch { line-height: 17px; padding-top: 6px; }
.toggle { display: flex !important; width: 66px; height: 22px; border: 1px solid #97a8c0; border-radius: 2px; background: linear-gradient(#f0f5fb, #dbe6f3); margin-bottom: 6px; align-items: center; }
.toggle input { appearance: none; margin: 0; width: 27px; height: 20px; background: linear-gradient(#c4cedb, #aebccf 50%, #d2dbe7); border-right: 1px solid #8fa0b8; }
.toggle b { flex: 1; text-align: center; color: #4e6278; }
.w24 { width: 24px; } .w44 { width: 44px; } .w49 { width: 49px; } .w62 { width: 62px; } .w66 { width: 66px; } .w68 { width: 68px; } .w72 { width: 72px; } .w80 { width: 80px; }

.group { position: relative; border: 1px solid #6e7d94; border-radius: 6px 6px 0 0; }
.chip { position: absolute; left: 50%; top: -10px; transform: translateX(-50%); height: 20px; line-height: 15px; padding: 0 8px; background: linear-gradient(#f8fbff, #dce8f6); border: 1px solid #6e7d94; border-radius: 2px; color: #1f3576; white-space: nowrap; }
.main-info { margin: 8px 0 0; height: 119px; flex: none; padding: 11px 3px 0 3px; border-bottom: 0; background: #eef5fd; }
.main-grids { display: flex; height: 107px; border: 1px solid #839ebf; background: #fff; }
.main-wrap { flex: 1 1 1231px; min-width: 0; overflow: hidden; border-right: 1px solid #839ebf; }
.side-wrap { flex: 0 1 199px; }
.grid { border-collapse: collapse; table-layout: fixed; width: 100%; }
.grid th, .grid td { padding: 0 2px; border: 1px solid #8fa8c8; white-space: nowrap; overflow: hidden; font-weight: 400; line-height: 18px; }
.grid th { font-family: "Open Sans", "Noto Sans CJK SC", sans-serif; height: 32px; padding: 0; text-align: center; background: linear-gradient(#f4f8fd, #e4edf8); border-top: 0; }
.grid.short th { height: 21px; }
.grid th:first-child, .grid td:first-child { border-left: 0; }
.grid td { height: 22px; background: #b0d3f7; border-color: #a6cdf6; }
.grid .tight { padding: 0 1px; font-size: 11px; }
.grid .filler { background: #cbdaed; }
.grid .mark { background: #c5cbd6; padding: 0; border-right-color: #8fa8c8; }
.mark i { display: block; border: 4px solid transparent; border-left: 5px solid #000; border-right: 0; width: 0; margin-left: 4px; }
.corner { background: linear-gradient(135deg, transparent 0 50%, #3d7cd8 50%) right 4px bottom 2px / 11px 11px no-repeat, linear-gradient(#f4f8fd, #e4edf8) !important; }
.c9 { width: 9px; } .c33 { width: 33px; } .c34 { width: 34px; } .c39 { width: 39px; } .c40 { width: 40px; } .c41 { width: 41px; } .c52 { width: 52px; } .c58 { width: 58px; } .c61 { width: 61px; } .c62 { width: 62px; } .c64 { width: 64px; } .c65 { width: 65px; } .c70 { width: 70px; } .c71 { width: 71px; } .c80 { width: 80px; } .c88 { width: 88px; } .c94 { width: 94px; } .c99 { width: 99px; } .c100 { width: 100px; } .c103 { width: 103px; } .c113 { width: 113px; } .c118 { width: 118px; } .c120 { width: 120px; } .c127 { width: 127px; }

.hsplit { height: 7px; flex: none; border-top: 2px solid #5f7290; background: linear-gradient(#d5dde8, #8e9caf); display: flex; justify-content: center; align-items: center; gap: 12px; }
.dots { display: block; }
.hsplit .dots { width: 35px; height: 3px; background: repeating-linear-gradient(90deg, #1f3576 0 2px, #e4eaf4 2px 4px); }
.lower { flex: 1; display: flex; min-height: 0; border-bottom: 2px solid #4a6796; }
.process { flex: 636; min-width: 0; margin: 11px 0 0; display: flex; flex-direction: column; padding: 11px 2px 0 4px; background: #eef5fd; border-bottom: 0; }
.process .chip { top: -11px; padding: 0 6px; min-width: 150px; text-align: center; }
.proc-box { flex: 1; min-height: 0; display: flex; flex-direction: column; border: 1px solid #8fa8c8; background: #fff; }
.proc-view { flex: 1; min-height: 0; display: grid; grid-template-columns: minmax(0, 1fr) 17px; grid-template-rows: 18px minmax(0, 1fr); }
.proc-head { display: grid; grid-template-columns: minmax(0, 1fr) 55px 75px 75px 37px; background: linear-gradient(#f6faff, #e0eaf6); border-bottom: 1px solid #b7c8df; line-height: 17px; }
.proc-head span { padding-left: 7px; border-right: 1px solid #b7c8df; overflow: hidden; white-space: nowrap; }
.proc-head span:first-child { text-align: right; padding-right: 129px; }
.proc-head span:nth-child(2) { padding-left: 2px; }
.proc-scroll { grid-row: 2; overflow: hidden; display: flex; align-items: flex-end; }
.tree { border-collapse: collapse; width: 100%; table-layout: fixed; margin-bottom: -9px; }
.tree td { height: 19px; padding: 0 0 0 6px; line-height: 18px; white-space: nowrap; overflow: hidden; border-right: 1px solid #dedede; width: 75px; }
.tree td:nth-child(2) { width: 55px; }
.tree td:last-child { width: 37px; border-right: 0; }
.tree td:first-child { width: auto; padding: 0; display: flex; align-items: center; justify-content: flex-start; padding-left: calc(100% - 131px); background: repeating-linear-gradient(#777 0 1px, transparent 1px 2px) calc(100% - 130px) 0 / 1px 19px no-repeat; }
.tree td i { width: 14px; height: 19px; margin: 0 0 0 16px; flex: none; background: repeating-linear-gradient(#777 0 1px, transparent 1px 2px) 0 0 / 1px 100% no-repeat, repeating-linear-gradient(90deg, #777 0 1px, transparent 1px 2px) 0 10px / 10px 1px no-repeat; }
.tree .l td i { background-size: 1px 10px, 10px 1px; }
.tree .f td i { margin: 0 8px 0 -4px; width: 9px; height: 9px; border: 1px solid #8a8f99; background: linear-gradient(#333, #333) center / 5px 1px no-repeat, #fff; }
.tree svg { width: 14px; height: 17px; margin-right: 6px; }
.tree .f svg { width: 16px; height: 16px; margin-right: 5px; }
.tree .sel td { background: linear-gradient(#f8f8f8, #e4e4e4); border-top: 1px solid #d5d5d5; border-bottom: 1px solid #d5d5d5; }
.tree .sel td:first-child { border-top-color: transparent; border-bottom-color: transparent; background: repeating-linear-gradient(#777 0 1px, transparent 1px 2px) calc(100% - 130px) 0 / 1px 19px no-repeat, linear-gradient(#f8f8f8, #e4e4e4) right 0 top 0 / 103px 100% no-repeat; }
.vbar { grid-row: 1 / 3; grid-column: 2; background: #f4f4f4; display: flex; flex-direction: column; align-items: center; padding: 6px 1px; }
.vbar .thumb { flex: 0 0 188px; align-self: stretch; margin: auto 0 212px; border: 1px solid #979797; border-radius: 2px; background: repeating-linear-gradient(#777 0 1px, transparent 1px 3px) center / 9px 8px no-repeat, linear-gradient(90deg, #f7f7f7, #d8dce2); }
.vbar .caret { margin-bottom: 2px; }
.hbar { height: 17px; flex: none; background: #f4f4f4; display: flex; align-items: center; padding: 1px 25px 1px 0; justify-content: space-between; }
.hbar .thumb { height: 15px; width: 71%; border: 1px solid #979797; border-radius: 2px; background: repeating-linear-gradient(90deg, #777 0 1px, transparent 1px 3px) calc(100% - 95px) center / 8px 8px no-repeat, linear-gradient(#f7f7f7, #d8dce2); }
.vsplit { width: 7px; flex: none; background: linear-gradient(90deg, #dbe4ee, #8795ab); display: flex; flex-direction: column; align-items: center; justify-content: center; gap: 10px; border-right: 1px solid #4a6796; }
.vsplit .dots { width: 3px; height: 35px; background: repeating-linear-gradient(#1f3576 0 2px, #e4eaf4 2px 4px); }
.detail { flex: 788; min-width: 0; display: flex; flex-direction: column; }
.dtabs { height: 26px; flex: none; display: flex; align-items: center; background: linear-gradient(#b4c9e6, #dfe8f4); border-bottom: 1px solid #94a9c8; }
.dtabs button { height: 26px; width: 50px; line-height: 22px; padding-bottom: 3px; text-align: center; }
.dtabs .on { width: 68px; background: linear-gradient(#4386de, #2055b0 45%, #3a80dc); color: #fff; font-size: 13px; font-weight: 700; position: relative; }
.dtabs .on::after { content: ""; position: absolute; left: 29px; bottom: 0; border: 5px solid transparent; border-top: 0; border-bottom-color: #fff; }
.dtabs button:nth-child(2) { width: 34px; }
.dtabs .caret { margin-left: auto; margin-right: 4px; color: #000; }
.panes { flex: 1; display: flex; min-height: 0; }
.pane { min-width: 0; display: flex; flex-direction: column; border: 1px solid #4a6796; border-width: 0 1px 1px 0; }
.params { flex: 376; }
.notes { flex: 405; }
.ptab-row { height: 24px; flex: none; padding: 2px 0 0 14px; background: linear-gradient(#bfd5f3, #f4f8fe); border-bottom: 1px solid #4a6796; }
.ptab { position: relative; height: 21px; width: 87px; padding-left: 8px; text-align: center; font-size: 13px; font-weight: 700; line-height: 18px; border: 1px solid #4a6796; border-width: 1px 1px 0 0; border-radius: 0 3px 0 0; background: linear-gradient(#eef5ff, #9dbcee); z-index: 0; }
.ptab::before { content: ""; position: absolute; z-index: -1; left: -6px; top: -1px; width: 20px; height: 21px; border: 1px solid #4a6796; border-width: 1px 0 0 1px; border-radius: 3px 0 0 0; background: linear-gradient(#eef5ff, #9dbcee); transform: skewX(-30deg); }
.pane-body { flex: 1; min-height: 0; border-top: 5px solid #8eb0e4; background: #fff; }
.params .pane-body { border-left: 1px solid #8eb0e4; }
.grid.props td { background: #fff; border-color: #c5d5ec; padding: 0 1px; }
.grid.props td:nth-child(2), .grid.props td:nth-child(4) { background: #e8f1fb; }
.grid.props .alt td:nth-child(3), .grid.props .alt td:nth-child(4) { background: #f3f3f3; }
.grid.props .mark { background: #dbe6f4; border-color: #a9bfdd; }
.grid.props .focus { outline: 1px dotted #000; outline-offset: -1px; }
.pink { color: #b0168a; }
.note-cols { display: flex; }
.note { flex: 1; min-width: 0; display: flex; flex-direction: column; border-left: 1px solid #839ebf; }
.note:first-child { flex-grow: 0; flex-basis: 49%; }
.note label { height: 26px; flex: none; line-height: 23px; padding-left: 2px; color: #27437f; background: linear-gradient(#f1f6fd, #dde8f6); border-bottom: 2px solid #7c93b2; }
.note-area { flex: 1; display: flex; min-height: 0; background: #efefef; }
.note-area textarea { flex: 1; min-width: 0; resize: none; border: 0; background: none; outline: 0; }
.note-bar { width: 17px; border-left: 1px solid #f9f9f9; display: flex; flex-direction: column; justify-content: space-between; align-items: center; padding: 7px 0; background: #f0f0f0; }
.note-bar .grey { color: #888; border-left-width: 3px; border-right-width: 3px; }
.status { grid-column: 1 / 4; background: linear-gradient(#f0f6fd, #dce7f4); border-top: 1px solid #6c81a0; display: flex; align-items: center; padding-left: 587px; padding-right: 29px; color: #1f3a73; }
.status .ver { flex: 1; }
.clock { width: 21px; height: 21px; margin-right: 9px; }
.status time { min-width: 114px; font-size: 13px; }

/* Excel window */
.excel { position: absolute; left: 0; top: 217px; bottom: 10px; width: 711px; display: flex; flex-direction: column; background: #c4d9ef; border: 1px solid #2c3644; border-left: 0; border-radius: 0 8px 0 0; box-shadow: 2px 2px 14px 3px rgba(0,0,0,.75); padding-right: 7px; overflow: hidden; clip-path: inset(-20px -24px 0 0); }
.title { height: 28px; flex: none; margin-right: -1px; display: flex; align-items: flex-start; justify-content: space-between; background: linear-gradient(90deg, #a8b6c0 0, #a3a1aa 60px, #bfcfd8 100px, #8ccfc8 140px, #7bbfb9 160px, #5e646c 175px, #4d5157 260px, #9aa3b0 292px, #b9d0ee 310px, #c2dcfb 100%); }
.title h1 { font: 12px/28px "Noto Sans", sans-serif; color: #000; text-shadow: 0 0 6px #fff, 0 0 4px #fff, 0 0 8px #fff; white-space: nowrap; overflow: hidden; min-width: 0; }
.winbtns { display: flex; width: 103px; height: 18px; flex: none; border: 1px solid #5a6880; border-top: 0; border-radius: 0 0 4px 4px; overflow: hidden; }
.winbtns button { width: 28px; display: grid; place-items: center; background: linear-gradient(#e3eaf3, #b2bfd0 50%, #d5deea); border-right: 1px solid #66748c; }
.winbtns svg { width: 14px; height: 12px; }
.winbtns .close { flex: 1; border: 0; background: linear-gradient(#e8a192, #c23a26 50%, #d86b50); }
.xl-body { flex: 1; min-height: 0; display: flex; flex-direction: column; border: 1px solid #35598f; border-left: 0; background: #bfdbff; }
.xl-tabs { height: 25px; flex: none; display: flex; gap: 29px; align-items: center; padding-left: 17px; color: #15428b; line-height: 24px; }
.xl-tabs button, .rg, .rg button { font-family: "Open Sans", "Noto Sans CJK SC", sans-serif; }
.xl-ctl { width: 84px; height: 16px; margin-left: auto; }
.ribbon { height: 107px; flex: none; display: flex; gap: 4px; padding: 3px 0 2px; background: linear-gradient(#dfe9f5 0, #c9daee 25%, #d3e3f4 60%, #e0effc); border: 1px solid #8db2e3; border-left: 0; border-radius: 0 4px 4px 0; }
.rg { display: flex; flex-direction: column; border: 1px solid #a4bedd; border-radius: 3px; color: #15428b; overflow: hidden; flex: none; background: linear-gradient(#dde8f5 0, #ccdcef 20%, #d5e4f4); }
.rg > footer { height: 20px; flex: none; text-align: center; line-height: 21px; background: #c1d8f0; color: #3e6aaa; position: relative; }
.rg > footer svg { position: absolute; right: 5px; top: 4px; width: 8px; height: 8px; }
.g-font { width: 34px; border-left: 0; } .g-align { width: 164px; } .g-num { width: 136px; } .g-style { width: 115px; } .g-cell { width: 68px; } .g-edit { width: 124px; }
.rg-in { flex: 1; display: flex; flex-direction: column; justify-content: space-between; padding: 12px 3px 11px; }
.rrow { display: flex; gap: 3px; height: 22px; }
.g-font .rg-in { padding-left: 0; }
.g-font .rrow .bs { flex: 1; border-left: 0; justify-content: flex-end; }
.g-font .serif { font: bold 13px/20px "Liberation Serif", serif; display: block; }
.g-font sup { font-size: 8px; }
.wen { font-size: 11px; line-height: 11px; display: block !important; padding: 0 !important; }
.wen small { display: block; font-size: 8px; line-height: 9px; }
.bs { display: flex; border: 1px solid #9ab7dd; border-radius: 2px; }
.bs.grow { flex: 1; }
.push { margin-left: auto; }
.bs button { min-width: 22px; padding: 0 2px; display: grid; place-items: center; color: #222; border-left: 1px solid #bccfe6; }
.bs button:first-child { border-left: 0; }
.bs.grow button { flex: 1; border-left: 0; }
.bs svg { width: 17px; height: 16px; }
.bs .dd { min-width: 9px; padding: 0; }
.bs .hot { background: linear-gradient(#fbdcae, #fbb95c 50%, #ffe08b); }
.bs .orient { display: flex; align-items: center; color: #333; padding: 0 3px; font-weight: 700; font-size: 10px; }
.bs .orient svg { width: 11px; height: 16px; }
.bs .dec { font: bold 8px/9px "Open Sans", sans-serif; min-width: 21px; padding: 0; }
.rg .caret { color: #5879ab; }
.pick { position: relative; }
.rrow select { appearance: none; width: 100%; height: 26px; margin-top: -2px; padding: 0 3px; border: 1px solid #b6cbe6; border-radius: 0; background: #eaf2fb; color: #111; }
.pick .caret { position: absolute; right: 5px; top: 9px; }
.rg-list { flex: 1; display: flex; flex-direction: column; padding: 1px 5px 0; }
.rg-list button { height: 22px; display: flex; align-items: center; gap: 3px; white-space: nowrap; line-height: 20px; }
.rg-list svg { width: 16px; height: 16px; }
.rg-list .caret { margin-left: 3px; }
.rg-edit { flex: 1; display: flex; }
.rg-edit .rg-list { flex: 0 0 36px; padding-right: 0; gap: 0; }
.sigma { font-size: 16px; color: #000; width: 14px; }
.bigbtn { width: 42px; line-height: 17px; text-align: center; display: flex; flex-direction: column; align-items: center; padding-top: 3px; }
.bigbtn svg { width: 30px; height: 30px; margin-bottom: 5px; }
.bigbtn .caret { display: inline-block; margin: 0 0 3px 4px; }
.formula { display: flex; height: 21px; flex: none; margin-top: 1px; border: 1px solid #5f83b5; border-width: 1px 0; background: #fff; }
.formula input { flex: 1; min-width: 0; border: 0; padding: 0; font-size: 15px; outline: 0; }
.spin { width: 15px; background: #8db0dd; display: flex; flex-direction: column; justify-content: space-around; align-items: center; }
.formula button { width: 15px; display: grid; place-items: center; background: #e3eefb; }
.formula button svg { width: 10px; height: 12px; }
.sheet-row { flex: 1; min-height: 0; display: flex; margin-top: 3px; }
.sheet { flex: 1; min-width: 0; overflow: hidden; background: #e4dfec; }
.cells { border-collapse: collapse; table-layout: fixed; width: 687px; line-height: 17px; }
.cells th { height: 11px; font: 8px/10px "Open Sans", sans-serif; padding: 0; background: linear-gradient(#f5f8fc, #d2dcea); border: 1px solid #9eb6ce; color: #222; }
.cells th.s { background: linear-gradient(#f9d99f, #f1c15f); border-color: #f29536; }
.cells td { border: 1px solid #000; padding: 0; font-size: 13px; }
.cells > tbody > tr > td:first-child { border-left: 0; }
.mid { text-align: center; }
.txt { max-width: 0; overflow: hidden; border-right: 0 !important; }
.cells .txt { padding-left: 3px; }
.txt p { font-size: 13px; line-height: 17px; height: 17px; white-space: nowrap; overflow: hidden; }
.txt b { font-size: 14px; }
.txt b .mono { font-size: 13px; }
.cells em { font-style: normal; color: #f00000; }
.cells .go { color: #067a06; }
.topcell, .lastcell { vertical-align: top; }
.cells .lastcell { padding-top: 5px; }
.cells .topcell { padding-top: 1px; }
.picked { outline: 1px solid #223; outline-offset: 1px; }
.h194 { height: 194px; } .h53 { height: 53px; } .h79 { height: 79px; } .h35 { height: 35px; } .h45 { height: 45px; } .h104 { height: 104px; }
.pic { margin: 10px 0 0 2px; background: #fff; height: 160px; padding: 3px 0 0 16px; overflow: hidden; }
.tol { border-collapse: collapse; table-layout: fixed; width: 542px; border: 2px solid #000; margin-bottom: 5px; }
.tol td { height: 21px; border: 1px solid #222; text-align: center; font-size: 11px; white-space: nowrap; line-height: 16px; color: #222; overflow: hidden; }
.slot { margin-left: 193px; font-family: "Liberation Serif", serif; }
.xl-bar { width: 16px; flex: none; background: #7396c8; display: flex; flex-direction: column; align-items: center; }
.xl-bar .split { width: 14px; height: 8px; border: 1px solid #5f83b5; background: #fff; margin: 2px 0 6px; }
.xl-bar .thumb { margin-top: 172px; width: 15px; flex: 0 0 227px; border: 1px solid #6781a8; border-radius: 2px; background: repeating-linear-gradient(#6e86aa 0 1px, transparent 1px 3px) center / 9px 10px no-repeat, linear-gradient(90deg, #f0f5fb, #cfdbea); }

.ime { position: absolute; right: 46px; bottom: 84px; width: 79px; height: 26px; display: flex; align-items: center; gap: 7px; padding: 0 5px; color: #fff; background: linear-gradient(#b5b8b5, #6d706d 45%, #4c4f4e); border-top: 1px solid #777; }
.grip { width: 8px; height: 16px; background: radial-gradient(circle, #222 1px, transparent 1px) 0 0 / 4px 4px; }
.ime button { width: 15px; height: 15px; border-radius: 8px; background: #1414a4; border: 1px solid #c8c8e8; color: #fff; font-weight: 700; line-height: 13px; }
.ime-ctl { margin-left: auto; display: flex; flex-direction: column; gap: 7px; align-items: center; }
.ime-ctl i:first-child { width: 5px; height: 2px; background: #fff; }
.ime-ctl .caret { color: #fff; }
.marks { position: absolute; left: 0; top: 0; width: 100%; height: 100%; pointer-events: none; }

.taskbar { position: absolute; left: 0; right: 0; bottom: 0; height: 10px; padding-left: 60px; overflow: hidden; display: flex; gap: 2px; background: linear-gradient(90deg, #39607c, #46799a 40%, #15335c 88%, #1b4063); border-top: 1px solid #0c1d2e; }
.taskbar button { flex: 0 1 92px; height: 20px; border: 1px solid #16293c; border-radius: 3px 3px 0 0; background: linear-gradient(100deg, #a9bfcf, #50799a 50%, #2e5375); padding: 2px 0 0 8px; box-shadow: inset 1px 1px #c5d8e6; }
.taskbar svg { width: 20px; height: 10px; }
.taskbar svg.wide { width: 28px; }
.taskbar button i { display: block; height: 12px; width: 22px; }
.taskbar .ball { border-radius: 11px 11px 0 0; background: #2f86e8; margin-left: 4px; }
.taskbar .gold { background: #f0b642; }
.taskbar .disk { background: linear-gradient(90deg, #1537b8 30%, #dce6f8 30% 65%, #1537b8 65%); }
.taskbar button .teal { background: #159191; width: 10px; }
.taskbar .red { background: #d83a24; border-radius: 10px 2px 0 0; margin-left: 12px; }
.taskbar .pict { background: #f5a93c; border: 2px solid #bfe0f6; }
.taskbar .doc { background: #f7f9fb; border-radius: 4px 4px 0 0; }
.taskbar .orb { position: absolute; left: 12px; top: 1px; width: 30px; height: 30px; border: 2px solid #9cc4d8; border-radius: 15px; background: #4a7189; }
.taskbar time { margin-left: auto; padding-right: 36px; color: #fff; line-height: 16px; flex: none; }
```
